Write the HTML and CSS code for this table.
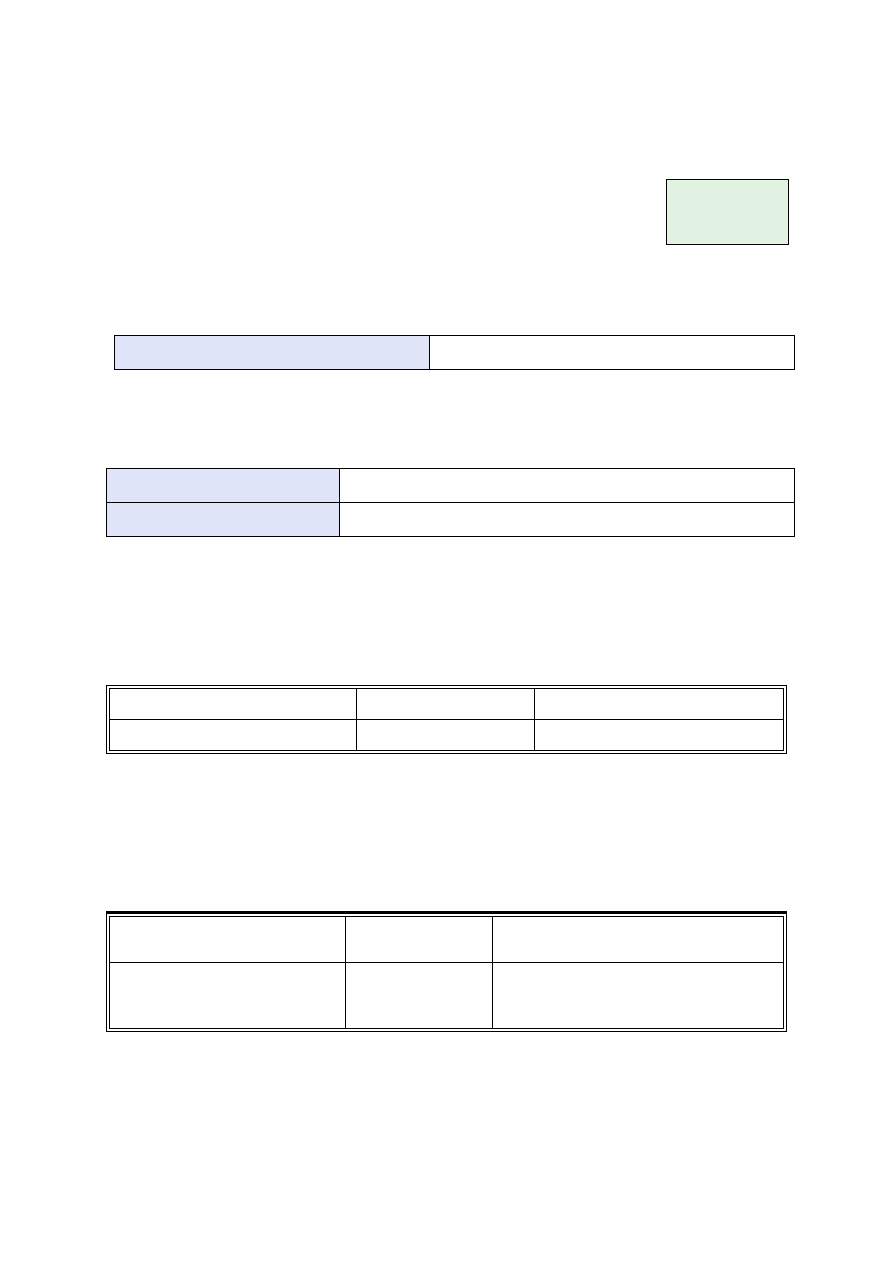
FILE: index.html
```html
<!DOCTYPE html>
<html lang="en">
<head>
<meta charset="utf-8">
<title>Document</title>
<link rel="stylesheet" href="styles.css">
</head>
<body>
<main class="page">
  <div class="header">
    <div class="stamp"></div>
  </div>

  <div class="grid t1">
    <div class="cell label"></div>
    <div class="cell"></div>
  </div>

  <div class="grid t2">
    <div class="cell label"></div>
    <div class="cell"></div>
    <div class="cell label"></div>
    <div class="cell"></div>
  </div>

  <div class="frame t3-frame">
    <div class="grid t3">
      <div class="cell"></div>
      <div class="cell"></div>
      <div class="cell"></div>
      <div class="cell"></div>
      <div class="cell"></div>
      <div class="cell"></div>
    </div>
  </div>

  <div class="frame t4-frame">
    <div class="grid t4">
      <div class="cell"></div>
      <div class="cell"></div>
      <div class="cell"></div>
      <div class="cell"></div>
      <div class="cell"></div>
      <div class="cell"></div>
    </div>
  </div>
</main>
</body>
</html>
```

FILE: styles.css
```css
* { box-sizing: border-box; }

html, body {
  margin: 0;
  padding: 0;
  background: #ffffff;
  font-family: "Liberation Sans", Arial, sans-serif;
}

.page {
  width: 893px;
  min-height: 1263px;
  padding-top: 179px;
}

.header {
  display: flex;
  justify-content: flex-end;
  padding-right: 104px;
}

.stamp {
  width: 123px;
  height: 66px;
  background: #e2f2e2;
  border: 1px solid #000;
}

.grid {
  display: grid;
  gap: 1px;
  background: #000;
  border: 1px solid #000;
}

.cell { background: #fff; }
.cell.label { background: #dfe4f8; }

.t1 {
  margin: 90px 0 0 114px;
  width: 681px;
  grid-template-columns: 314px 1fr;
  grid-template-rows: 33px;
}

.t2 {
  margin: 98px 0 0 106px;
  width: 689px;
  grid-template-columns: 232px 1fr;
  grid-template-rows: 33px 33px;
}

.frame {
  margin-left: 106px;
  width: 681px;
  border: 1px solid #000;
  padding: 2px;
}

.t3-frame { margin-top: 148px; }

.t3 {
  grid-template-columns: 246px 177px 1fr;
  grid-template-rows: 30px 30px;
}

.t4-frame {
  margin-top: 157px;
  border-top-width: 3px;
}

.t4 {
  grid-template-columns: 235px 146px 1fr;
  grid-template-rows: 45px 65px;
}
```
